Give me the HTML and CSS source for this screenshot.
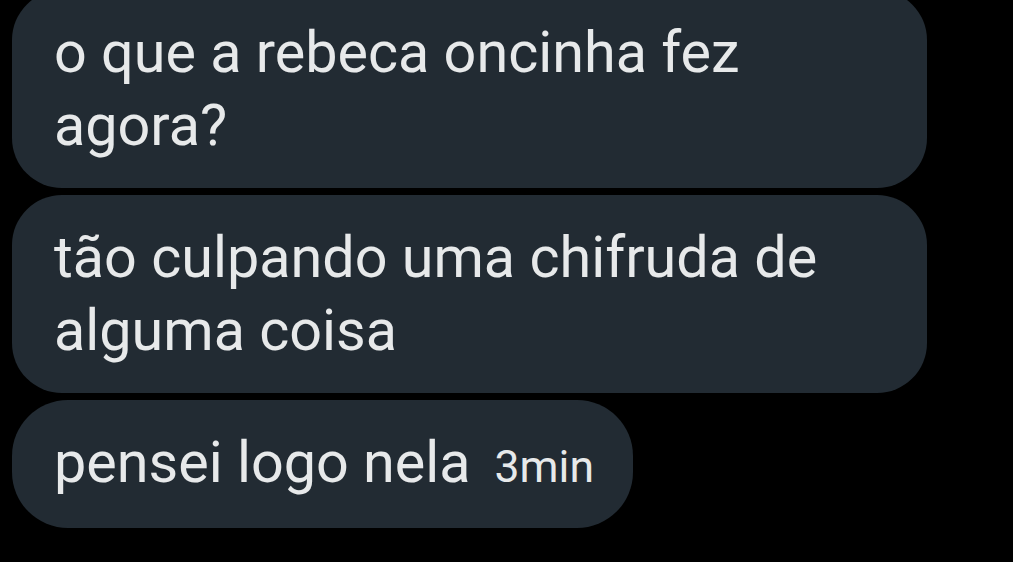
FILE: index.html
```html
<!DOCTYPE html>
<html lang="pt">
<head>
<meta charset="utf-8">
<title>Mensagens</title>
<link rel="stylesheet" href="styles.css">
</head>
<body>
<div class="thread">
  <div class="bubble wide">o que a rebeca oncinha fez agora?</div>
  <div class="bubble wide">tão culpando uma chifruda de alguma coisa</div>
  <div class="bubble single">pensei logo nela<span class="time">3min</span></div>
</div>
</body>
</html>
```
FILE: styles.css
```css
html, body {
  margin: 0;
  padding: 0;
  background: #000;
  height: 100%;
  overflow: hidden;
}
.thread {
  display: flex;
  flex-direction: column;
  align-items: flex-start;
  gap: 7px;
  padding-left: 12px;
  margin-top: -10px;
}
.bubble {
  box-sizing: border-box;
  background: #222b33;
  color: #e7e9ea;
  font-family: Roboto, "Liberation Sans", sans-serif;
  font-size: 57.5px;
  line-height: 73px;
  padding: 26px 39px 26px 42px;
  border-radius: 50px;
}
.bubble.wide {
  width: 915px;
}
.bubble.single {
  padding-bottom: 24px;
  border-radius: 56px;
}
.time {
  font-size: 44.5px;
  margin-left: 24px;
}
```
